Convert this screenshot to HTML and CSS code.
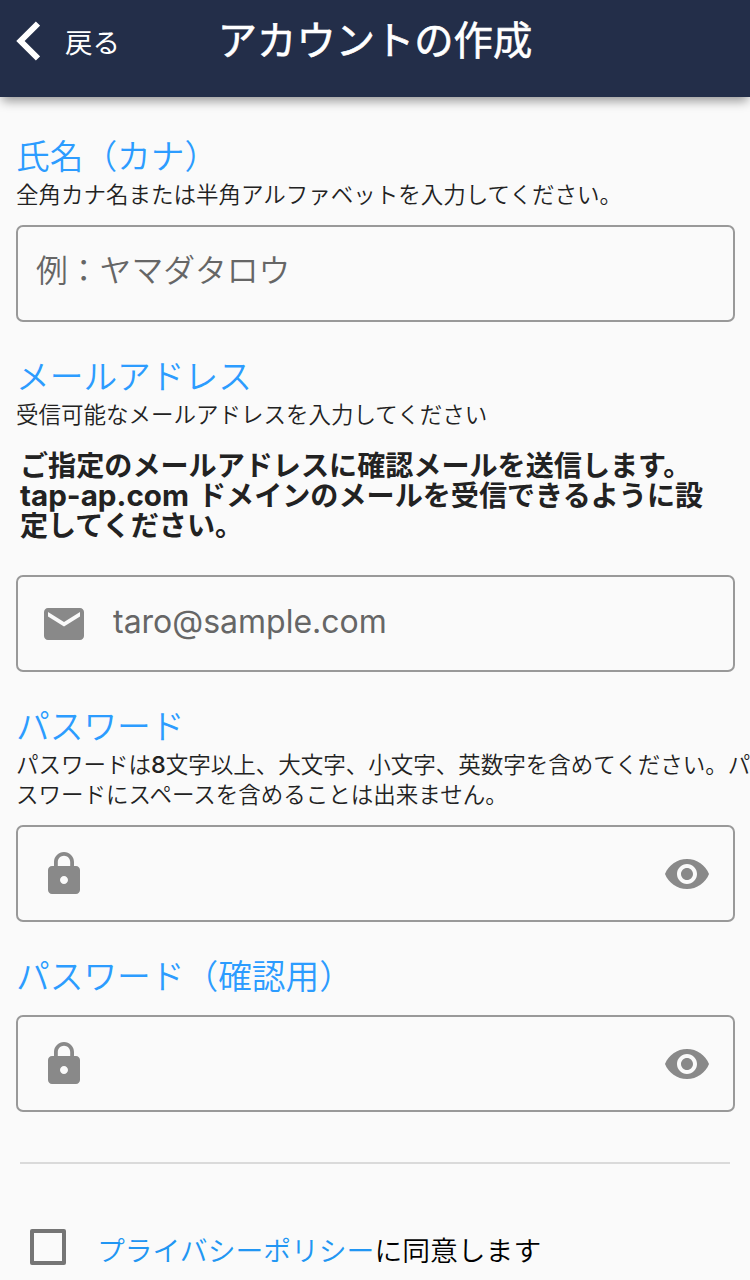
FILE: index.html
```html
<!DOCTYPE html>
<html lang="ja">
<head>
    <meta charset="utf-8">
    <title>アカウントの作成</title>
    <link rel="stylesheet" href="styles.css">
</head>
<body>
    <header class="header">
        <a class="back" href="#">
            <svg class="back-icon" viewBox="0 0 24 40"><path d="M22 2.5 L4.5 20 L22 37.5"/></svg>
            <span>戻る</span>
        </a>
        <h1 class="title">アカウントの作成</h1>
    </header>

    <form class="form">
        <label class="label" for="name">氏名（カナ）</label>
        <p class="help">全角カナ名または半角アルファベットを入力してください。</p>
        <div class="field">
            <input class="name-input" type="text" id="name" placeholder="例：ヤマダタロウ">
        </div>

        <label class="label" for="email">メールアドレス</label>
        <p class="help">受信可能なメールアドレスを入力してください</p>
        <p class="notice">ご指定のメールアドレスに確認メールを送信します。<br><span class="domain">tap-ap.com </span>ドメインのメールを受信できるように設<br>定してください。</p>
        <div class="field email-field">
            <svg class="icon" viewBox="0 0 24 24"><path d="M20 4H4c-1.1 0-1.99.9-1.99 2L2 18c0 1.1.9 2 2 2h16c1.1 0 2-.9 2-2V6c0-1.1-.9-2-2-2zm0 4.3l-8 4.9-8-4.9V6l8 5 8-5v2.3z"/></svg>
            <input type="email" id="email" placeholder="taro@sample.com">
        </div>

        <label class="label" for="password">パスワード</label>
        <p class="help">パスワードは<span class="digit">8</span>文字以上、大文字、小文字、英数字を含めてください。パ<br>スワードにスペースを含めることは出来ません。</p>
        <div class="field">
            <svg class="icon" viewBox="0 0 24 24"><path d="M18 8h-1V6c0-2.76-2.24-5-5-5S7 3.24 7 6v2H6c-1.1 0-2 .9-2 2v10c0 1.1.9 2 2 2h12c1.1 0 2-.9 2-2V10c0-1.1-.9-2-2-2zm-6 9c-1.1 0-2-.9-2-2s.9-2 2-2 2 .9 2 2-.9 2-2 2zm3.1-9H8.9V6c0-1.71 1.39-3.1 3.1-3.1 1.71 0 3.1 1.39 3.1 3.1v2z"/></svg>
            <input type="password" id="password">
            <svg class="icon" viewBox="0 0 24 24"><path d="M12 4.5C7 4.5 2.73 7.61 1 12c1.73 4.39 6 7.5 11 7.5s9.27-3.11 11-7.5c-1.73-4.39-6-7.5-11-7.5zM12 17c-2.76 0-5-2.24-5-5s2.24-5 5-5 5 2.24 5 5-2.24 5-5 5zm0-8c-1.66 0-3 1.34-3 3s1.34 3 3 3 3-1.34 3-3-1.34-3-3-3z"/></svg>
        </div>

        <label class="label" for="confirm">パスワード（確認用）</label>
        <div class="field">
            <svg class="icon" viewBox="0 0 24 24"><path d="M18 8h-1V6c0-2.76-2.24-5-5-5S7 3.24 7 6v2H6c-1.1 0-2 .9-2 2v10c0 1.1.9 2 2 2h12c1.1 0 2-.9 2-2V10c0-1.1-.9-2-2-2zm-6 9c-1.1 0-2-.9-2-2s.9-2 2-2 2 .9 2 2-.9 2-2 2zm3.1-9H8.9V6c0-1.71 1.39-3.1 3.1-3.1 1.71 0 3.1 1.39 3.1 3.1v2z"/></svg>
            <input type="password" id="confirm">
            <svg class="icon" viewBox="0 0 24 24"><path d="M12 4.5C7 4.5 2.73 7.61 1 12c1.73 4.39 6 7.5 11 7.5s9.27-3.11 11-7.5c-1.73-4.39-6-7.5-11-7.5zM12 17c-2.76 0-5-2.24-5-5s2.24-5 5-5 5 2.24 5 5-2.24 5-5 5zm0-8c-1.66 0-3 1.34-3 3s1.34 3 3 3 3-1.34 3-3-1.34-3-3-3z"/></svg>
        </div>

        <hr class="divider">

        <div class="agree">
            <input class="checkbox" type="checkbox" id="agree">
            <label class="agree-label" for="agree"><a href="#">プライバシーポリシー</a>に同意します</label>
        </div>
    </form>
</body>
</html>
```
FILE: styles.css
```css
* {
    box-sizing: border-box;
}

body {
    margin: 0;
    height: 1280px;
    overflow: hidden;
    background-color: #fafafa;
    color: #222;
    font-family: Inter, "Noto Sans CJK JP", sans-serif;
}

a {
    color: #2196f3;
    text-decoration: none;
}

.header {
    display: grid;
    grid-template-columns: 203px 1fr 203px;
    height: 97px;
    background-color: #232e49;
    box-shadow: 0 6px 10px -2px rgba(0, 0, 0, 0.4);
}

.back {
    display: flex;
    align-items: center;
    gap: 25px;
    height: 82px;
    padding-left: 16px;
    color: #fff;
    font-size: 27.5px;
}

.back-icon {
    width: 24px;
    height: 40px;
    fill: none;
    stroke: #fff;
    stroke-width: 6;
}

.title {
    margin: 0;
    color: #fff;
    font-size: 39.3px;
    font-weight: 400;
    line-height: 82px;
    text-align: center;
    white-space: nowrap;
    -webkit-text-stroke: 0.6px #fff;
}

.form {
    padding: 40px 15px 0 16px;
}

.label {
    display: block;
    height: 43px;
    color: #2c9cff;
    font-size: 33.7px;
    font-weight: 350;
    line-height: 39px;
}

.help {
    margin: 0;
    font-size: 22.5px;
    font-weight: 350;
    line-height: 30px;
    white-space: nowrap;
}

.digit {
    font-size: 23.5px;
    font-weight: 500;
    line-height: 1;
}

.notice {
    margin: 21px 4px 0;
    font-size: 28.1px;
    font-weight: bold;
    line-height: 30px;
    white-space: nowrap;
}

.domain {
    font-size: 29.6px;
    line-height: 1;
    word-spacing: 2px;
}

.field {
    display: flex;
    height: 97px;
    margin: 15px 0 35px;
    padding: 23px 22px 0;
    border: 2px solid #999;
    border-radius: 7px;
}

.email-field {
    margin-top: 34px;
}

.field input {
    flex: 1;
    min-width: 0;
    height: 43px;
    padding: 0 25px;
    border: none;
    outline: none;
    background: none;
    font-family: inherit;
    font-size: 32px;
    font-weight: 400;
}

.field .name-input {
    height: 41px;
    margin-left: -4px;
    padding: 0;
    font-size: 31.8px;
    font-weight: 350;
}

.field input::placeholder {
    color: #666;
}

.icon {
    width: 48px;
    height: 48px;
    fill: #898989;
}

.divider {
    height: 2px;
    margin: 50px 5px 65px 4px;
    border: none;
    background-color: #dadada;
}

.agree {
    display: flex;
    gap: 31px;
    padding-left: 14px;
    color: #000;
    font-size: 27.8px;
    font-weight: 350;
    line-height: 40px;
}

.agree-label {
    padding-top: 2px;
}

.checkbox {
    appearance: none;
    width: 36px;
    height: 36px;
    margin: 0;
    border: 4px solid #757575;
    border-radius: 2px;
}
```
